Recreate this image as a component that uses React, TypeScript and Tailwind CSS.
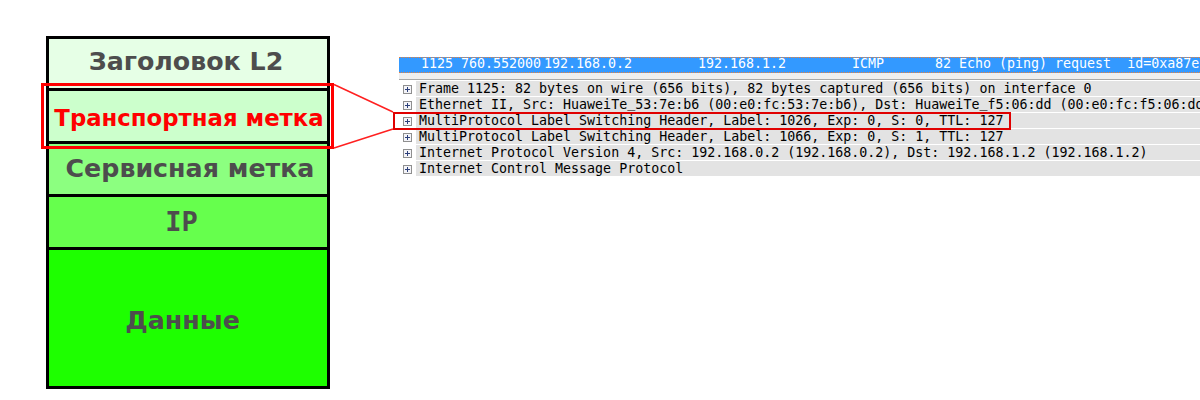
import React from "react";

const rows = [
  { text: "Заголовок L2", className: "h-[49px] bg-[#e6ffe6] text-[#4d4d4d] text-[25.3px] pb-[3px] pr-[4px]" },
  { text: "Транспортная метка", className: "h-[50px] bg-[#ccffcc] text-[#ff0000] text-[22.8px] pt-[5px] pl-[2px]" },
  { text: "Сервисная метка", className: "h-[50px] bg-[#8cff80] text-[#4d4d4d] text-[25.3px] pl-[4px]" },
  { text: "IP", className: "h-[50px] bg-[#66ff4d] text-[#4d4d4d] text-[27px] pr-[13px] font-['DejaVu_Sans_Mono',monospace]" },
  { text: "Данные", className: "h-[136px] bg-[#1eff00] text-[#4d4d4d] text-[25.3px] pt-[6px] pr-[11px]" },
];

const packetLines = [
  "Frame 1125: 82 bytes on wire (656 bits), 82 bytes captured (656 bits) on interface 0",
  "Ethernet II, Src: HuaweiTe_53:7e:b6 (00:e0:fc:53:7e:b6), Dst: HuaweiTe_f5:06:dd (00:e0:fc:f5:06:dd)",
  "MultiProtocol Label Switching Header, Label: 1026, Exp: 0, S: 0, TTL: 127",
  "MultiProtocol Label Switching Header, Label: 1066, Exp: 0, S: 1, TTL: 127",
  "Internet Protocol Version 4, Src: 192.168.0.2 (192.168.0.2), Dst: 192.168.1.2 (192.168.1.2)",
  "Internet Control Message Protocol",
];

function ExpandBox() {
  return (
    <span className="relative block h-[9px] w-[9px] shrink-0 border border-[#8f8f8f] bg-[#f4f4f8]">
      <span className="absolute left-[1px] top-[3px] h-[1px] w-[5px] bg-[#2c3f7a]" />
      <span className="absolute left-[3px] top-[1px] h-[5px] w-[1px] bg-[#2c3f7a]" />
    </span>
  );
}

// underscores sit too low in this font and vanish under the row below
function PacketText({ line }: { line: string }) {
  const parts = line.split("_");
  return (
    <>
      {parts.map((part, idx) => (
        <React.Fragment key={idx}>
          {idx > 0 && <span className="relative -top-[2px]">_</span>}
          {part}
        </React.Fragment>
      ))}
    </>
  );
}

export default function App() {
  return (
    <div className="relative flex h-[400px] w-[1200px] overflow-hidden bg-white font-['DejaVu_Sans',sans-serif]">
      {/* label stack */}
      <div className="ml-[46px] mt-[36px] flex h-[353px] w-[284px] shrink-0 flex-col gap-[3px] border-[3px] border-black bg-black">
        {rows.map((row) => (
          <div
            key={row.text}
            className={`flex items-center justify-center font-bold whitespace-nowrap ${row.className}`}
          >
            {row.text}
          </div>
        ))}
      </div>

      {/* packet capture */}
      <div className="ml-[69px] mt-[57px] min-w-0 flex-1 font-['DejaVu_Sans_Mono',monospace] text-[13.3px] whitespace-pre">
        <div className="flex h-[16px] border-y border-dotted border-[#e8803a] bg-[#3399ff] pl-[22px] leading-[12px] text-white">
          <span className="w-[123px] shrink-0">1125 760.552000</span>
          <span className="w-[154px] shrink-0">192.168.0.2</span>
          <span className="w-[154px] shrink-0">192.168.1.2</span>
          <span className="w-[83px] shrink-0">ICMP</span>
          <span>82 Echo (ping) request  id=0xa87e,</span>
        </div>
        <div className="h-[7px] border-b border-[#a8a8a8] bg-[#eeeeee]" />
        <div className="mt-[1px] flex flex-col gap-[1px]">
          {packetLines.map((line) => (
            <div key={line} className="flex h-[15px] items-center">
              <span className="flex w-[17px] shrink-0 justify-center pr-[1px] pt-[1px]">
                <ExpandBox />
              </span>
              <span className="h-[15px] flex-1 bg-[#e3e3e3] pl-[3px] leading-[15px] text-black">
                <PacketText line={line} />
              </span>
            </div>
          ))}
        </div>
      </div>

      {/* callout over the diagram */}
      <div className="absolute left-[41px] top-[83px] h-[66px] w-[293px] border-[3px] border-[#ff0000]" />
      <div className="absolute left-[393px] top-[112px] h-[18px] w-[618px] border-2 border-[#e00000]" />
      <svg className="absolute left-0 top-0" width="1200" height="400" fill="none">
        <path d="M334 84.5 L393 112 M334 148 L393 129" stroke="#ff2020" strokeWidth="1.5" />
      </svg>
    </div>
  );
}
